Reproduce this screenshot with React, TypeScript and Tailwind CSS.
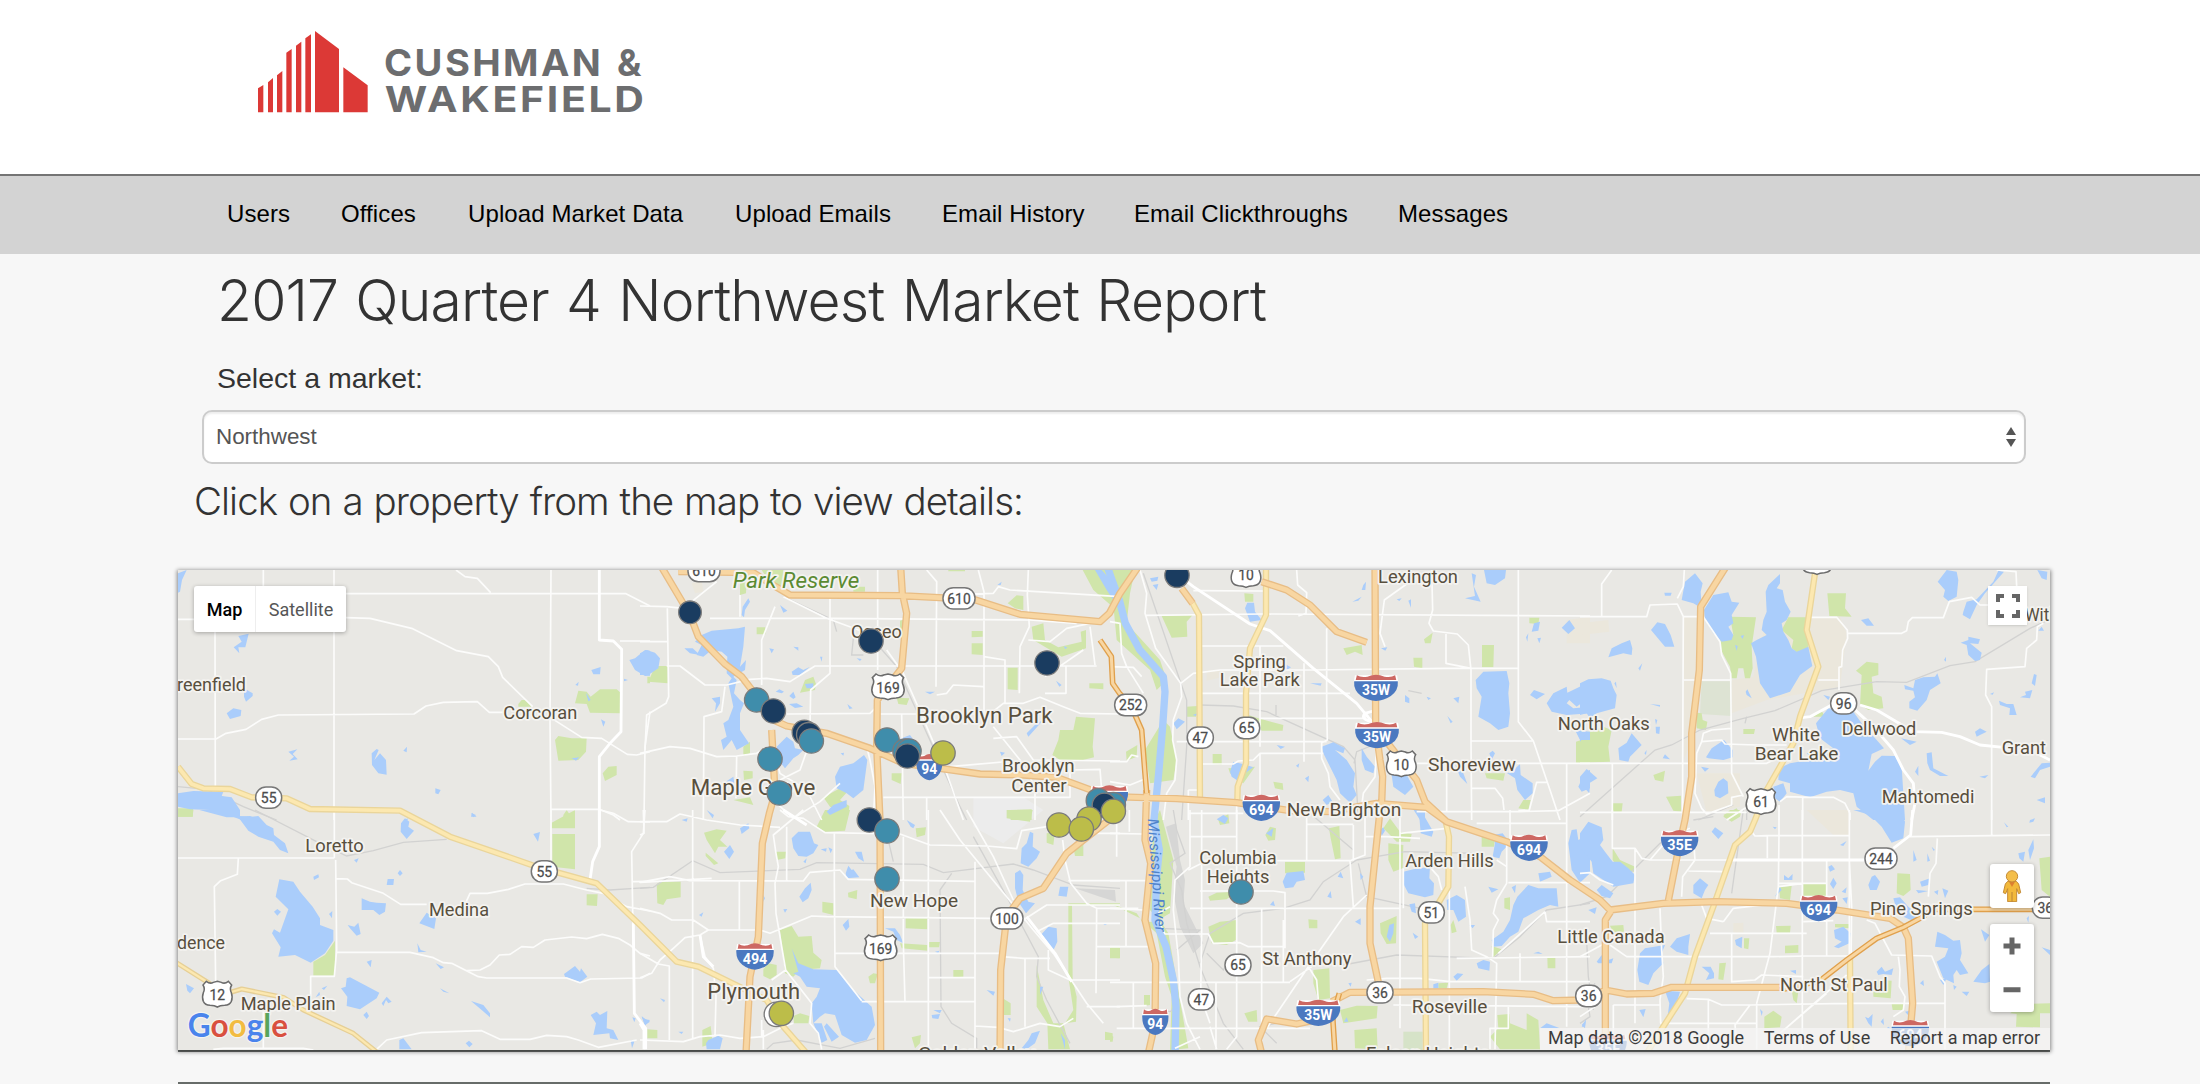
import React from "react";

type Pt = [number, number];

/* Map geometry is stored per sheet; each sheet has its own origin in map units (3 units = 1px). */
const SHEETS: Pt[] = [
  [0, 0],
  [0, 750],
  [1410, 0],
  [1410, 750],
  [2820, 0],
  [2820, 750],
  [4230, 0],
  [4230, 750],
];

const TAN: string[] = [
  "",
  "",
  "M155,70L185,62L190,95L165,100Z",
  "",
  "M290,330L345,330L340,350L290,362ZM1370,180L1440,170L1440,250L1370,250Z",
  "",
  "M0,190L85,180L88,215L0,225ZM312,170L358,170L350,500L312,600ZM560,170L780,170L800,220L780,380L560,420L455,460L455,360L520,350ZM350,640L480,640L480,740L380,760Z",
  "M460,340L490,338L490,370L460,372ZM680,0L808,0L808,75L760,75Z",
];

const PARKS: string[] = [
  "M1045,432L1055,420L1068,420L1085,440L1045,440ZM1215,430L1225,392L1250,395L1262,410L1290,388L1340,388L1352,398L1350,460L1260,458L1250,432ZM1155,540L1165,528L1205,535L1250,535L1248,575L1225,600L1165,602ZM1298,640L1315,620L1340,618L1340,645L1305,663ZM1432,350L1440,350L1440,370L1432,370ZM24,745L70,745L68,770L24,770ZM1180,765L1190,750L1200,765L1215,752L1215,780L1180,780Z",
  "M24,0L70,0L68,20L24,20ZM1145,38L1215,0L1215,55L1145,55ZM1147,72L1215,72L1215,178L1147,170ZM1250,253L1283,253L1281,288L1250,286ZM430,455L465,435L495,392L495,497L430,497Z",
  "M300,60L320,50L318,100L300,105ZM365,30L430,30L430,85L400,85ZM640,80L675,80L675,95L640,95ZM925,30L975,30L975,34L925,34ZM1328,30L1440,30L1440,160L1360,90ZM1103,130L1130,106L1150,108L1150,150L1125,145ZM350,202L376,202L376,223L350,223ZM25,365L45,318L83,318L83,370ZM995,213L1028,213L1028,230L995,232ZM995,250L1028,250L1028,285L995,283ZM780,182L795,178L790,215L780,220ZM1175,200L1210,190L1215,240L1255,262L1325,245L1322,215L1338,210L1338,265L1265,290L1180,240ZM480,398L495,360L520,350L528,372L525,390ZM1103,323L1133,323L1133,390L1103,388ZM1348,370L1390,370L1390,388L1348,385ZM770,413L808,415L800,435L775,432ZM1237,585L1255,540L1260,510L1300,510L1308,470L1365,475L1358,560L1362,592L1320,602L1260,600ZM310,560L330,545L330,580L310,588ZM310,632L338,634L338,655L312,660ZM755,640L785,640L782,672L755,660ZM550,712L600,685L618,668L625,692L600,720L628,738L625,765L570,740ZM280,720L330,712L340,735ZM1110,750L1175,748L1175,780L1112,780Z",
  "M530,50L555,0L630,0L615,62L555,65ZM50,222L60,215L122,215L122,262L80,268L70,285L52,280ZM192,68L230,58L260,62L240,90L262,110L235,110L225,130L200,90ZM197,128L235,160L222,165L197,138ZM407,125L438,125L436,145L410,150ZM827,55L858,52L855,75L830,82ZM1100,0L1178,0L1170,35L1100,25ZM1220,70L1245,65L1240,105L1220,98ZM1300,110L1330,95L1330,138L1305,138ZM547,275L580,280L580,315L547,307ZM624,248L652,240L650,268L625,262ZM420,360L455,348L475,380L515,378L520,428L545,450L540,475L480,480L460,500L435,490ZM797,325L862,325L862,358L797,355ZM780,400L862,405L862,422L785,415ZM866,396L900,396L897,412L866,412ZM370,478L385,460L410,465L410,495L390,508L370,498ZM685,500L700,490L713,492L705,520L690,520ZM940,480L970,480L970,500L940,502ZM1412,412L1440,412L1440,445L1412,443ZM460,618L480,610L508,618L505,640L462,640ZM22,658L52,660L52,685L22,685ZM187,660L212,648L218,700L187,710ZM815,682L843,675L840,700L825,715ZM1088,565L1112,580L1112,615L1092,615ZM1190,465L1210,570L1240,640L1270,640L1290,718L1225,718L1222,640L1190,590ZM1395,665L1418,670L1418,690L1395,690ZM1285,280L1440,280L1440,286L1296,286L1298,510L1310,560L1308,635L1275,640L1300,600L1285,500Z",
  "M0,30L75,30L60,100L50,190L150,300L170,360L140,390L120,330L20,240ZM155,168L248,165L230,185L232,230L185,233ZM403,100L430,102L430,125L405,125ZM50,215L60,212L85,250L65,270L48,250ZM1258,173L1288,173L1285,192L1258,190ZM700,265L755,255L758,285L735,275L710,285ZM942,238L968,218L962,250L945,250ZM910,293L937,293L937,325L912,320ZM1116,255L1152,255L1150,322L1116,322ZM230,440L262,438L258,470L230,470ZM415,465L445,475L520,495L518,512L455,512ZM105,570L160,480L180,500L200,600L190,660L120,670ZM48,575L82,555L80,590L50,602ZM308,582L335,582L335,615L308,612ZM355,625L435,620L400,670L360,640ZM490,665L518,670L520,690L495,685ZM1398,545L1440,530L1440,610L1398,608ZM1125,640L1185,640L1180,662L1130,655ZM1225,745L1240,720L1262,720L1255,750ZM330,780L345,765L355,780Z",
  "M0,412L28,412L28,445L0,445ZM102,555L120,555L120,585L102,587ZM0,675L10,680L8,695L0,695ZM130,40L150,0L190,150L180,310L145,330L120,300ZM0,280L80,310L100,340L150,330L175,370L205,540L235,715L180,720L185,560L165,500L140,370L90,325ZM325,30L355,12L358,40L330,45ZM466,75L480,50L498,55L495,90L475,92ZM657,55L688,48L692,145L675,148L662,85ZM820,55L840,25L870,65L905,72L900,95L860,95ZM835,100L880,105L878,175L850,185L835,150ZM525,155L585,155L585,188L525,190ZM295,260L320,248L380,245L350,268L300,272ZM295,350L330,335L380,330L378,390L350,405L305,400ZM595,328L622,330L622,355L597,355ZM810,340L860,318L858,400L830,402L812,370ZM1022,345L1030,330L1040,365L1025,370ZM1183,265L1200,262L1200,300L1183,295ZM1115,80L1155,85L1152,110L1115,110ZM1145,408L1175,418L1150,442ZM1312,443L1336,443L1336,475L1313,475ZM610,480L658,475L660,565L625,570L610,520ZM403,610L440,600L442,635L415,635ZM690,600L740,587L803,588L800,625L700,640ZM733,660L800,655L803,718L735,715ZM985,520L1015,518L1010,535L985,535ZM1162,615L1198,612L1200,640L1250,660L1250,610L1285,630L1290,718L1170,718L1140,680L1165,655Z",
  "M450,170L528,172L515,260L518,325L510,355L495,355L490,325L475,325L470,355L455,355L450,320L420,265L420,240L460,225ZM625,172L680,172L685,265L655,280L635,265L640,240L605,210ZM742,100L798,100L795,145L815,170L748,168ZM828,332L860,305L895,310L895,345L875,350L880,400L905,410L910,445L865,450L840,435L845,345ZM0,525L70,500L95,510L85,560L90,605L0,608ZM350,458L365,460L368,480L382,485L378,510L350,505ZM490,507L525,507L522,522L490,522ZM700,470L725,453L735,470ZM220,645L255,632L250,665L225,660ZM258,710L303,707L303,755L280,752ZM98,730L128,730L125,755L98,755ZM430,765L470,745L480,760L450,780Z",
  "M98,115L120,150L165,170L162,185L115,175L98,150ZM430,20L450,0L485,0L480,20L455,35ZM90,347L130,345L132,365L100,368ZM597,230L635,228L630,270L600,265ZM670,222L738,220L738,262L670,260ZM952,190L990,192L992,240L970,258L950,250ZM1378,145L1410,140L1410,260L1385,240ZM588,348L632,347L630,368L590,368ZM765,342L810,342L808,355L765,352ZM615,407L655,405L655,428L615,430ZM492,385L508,385L505,418L492,415ZM418,460L438,458L430,510L415,508ZM880,510L935,512L932,565L880,560ZM553,620L580,602L605,620L600,652L553,655ZM635,540L655,545L650,580L640,570ZM935,582L972,578L970,600L938,600ZM1290,610L1310,612L1308,650L1380,652L1380,610L1410,610L1410,580L1330,582Z",
];

const WATER: string[] = [
  "M24,40L50,30L36,60L30,95L24,98ZM205,228L236,221L226,262L205,262L208,280L191,262L215,245ZM222,385L248,400L248,408L228,425L222,410ZM170,460L190,445L214,450L212,468L180,477ZM355,575L382,568L368,582L383,598L358,602L372,590ZM605,580L620,567L626,570L613,600L630,580L648,600L650,644L625,640L606,615ZM700,572L711,560L710,577ZM796,685L812,690L805,703L796,700ZM1264,330L1292,321L1290,343L1270,343ZM1378,300L1395,295L1425,270L1440,272L1440,347L1425,348L1395,330ZM1248,398L1262,420L1255,424ZM1293,478L1306,485L1300,500ZM1216,375L1226,365L1224,377ZM1362,356L1374,360L1362,364ZM1205,595L1228,592L1218,602ZM24,700L70,693L160,695L155,708L185,712L210,750L210,770L240,768L272,780L215,780L175,765L120,750L60,748L24,740ZM903,770L906,758L920,770ZM700,780L715,775L712,780Z",
  "M88,0L205,0L207,18L245,20L265,18L290,45L310,55L312,75L345,100L355,130L330,120L310,95L265,80L235,62L205,22L170,22ZM693,40L705,25L718,35L715,50L732,62L710,87L692,65ZM903,10L918,15L910,22ZM1090,72L1110,66L1104,95ZM328,208L370,215L390,245L428,290L450,325L450,345L490,360L490,392L465,430L422,458L375,435L325,440L332,412L306,370L312,358L330,368L355,298L317,260ZM430,200L445,193L447,202L432,210ZM683,190L690,180L698,190L690,198ZM653,207L672,207L670,225L650,225ZM552,150L566,145L560,158ZM575,265L600,275L620,278L648,280L645,305L628,315L610,300L575,300ZM533,345L553,350L565,338L572,372L560,377L540,355ZM748,340L770,308L798,325L793,357ZM312,305L322,297L333,305L322,317ZM477,312L487,303L486,325ZM742,400L752,420L770,425L745,427ZM590,455L605,450L602,472ZM797,460L822,472L812,477ZM513,535L527,530L530,505L540,502L628,548L620,565L570,598L530,588L532,560ZM1182,492L1215,468L1230,485L1233,475L1252,500L1230,517L1185,500ZM635,580L650,560L665,575L655,580L648,570L640,588ZM580,615L590,605L597,618L590,627ZM48,522L72,535L60,550L52,542ZM437,562L448,545L450,555ZM455,535L472,527L462,540ZM810,535L838,550L820,545ZM903,573L940,585L960,610L960,622L935,600ZM1262,615L1280,605L1290,615L1312,603L1310,655L1330,660L1345,690L1320,685L1318,670L1270,675L1278,640ZM1415,620L1440,635L1425,645ZM1387,622L1397,625L1393,637ZM1382,690L1393,695L1386,715ZM887,700L897,692L908,702L898,712ZM688,690L700,685L725,718L688,718Z",
  "M0,280L20,270L45,278L60,295L55,325L25,345L0,345ZM185,225L215,212L295,205L315,200L310,260L300,320L318,300L315,330L280,350L290,360L282,400L300,420L312,430L300,460L300,510L327,550L290,570L275,540L250,570L243,540L260,530L250,490L265,480L280,440L265,370L275,355L260,340L262,290L245,275L215,270L190,290L170,285L185,255L165,245ZM133,265L158,265L180,285L150,280ZM305,165L308,140L325,115L330,125L315,150L312,172ZM420,135L442,152L430,158ZM1072,75L1085,65L1082,75ZM460,260L475,262L475,272ZM388,265L402,268L395,280ZM540,290L547,290L545,305ZM650,295L665,297L660,303ZM455,335L475,322L490,330L510,320L480,345L458,345ZM495,372L520,370L520,385L500,385ZM407,395L418,388L432,395L425,400ZM448,408L460,395L467,412L460,417ZM447,432L470,430L490,440L465,444ZM855,395L885,395L870,403ZM622,432L638,445L628,447ZM1272,258L1282,263L1275,267ZM1248,362L1265,375L1258,380ZM215,415L240,410L240,430L225,455L228,430ZM602,580L612,578L610,587ZM410,560L440,530L460,545L465,565L490,570L475,585L460,595L435,625L415,600ZM585,650L600,620L640,610L672,585L682,600L670,690L640,715L620,700L590,685ZM560,755L580,735L620,720L620,740L590,755L570,765ZM257,665L280,650L283,668L262,680ZM1080,575L1095,578L1085,588ZM1160,520L1190,490L1210,480L1165,530ZM1365,30L1385,30L1430,80L1440,150L1400,90ZM770,540L810,525L825,545L790,550Z",
  "M300,55L325,40L328,55L305,72ZM200,0L222,15L218,25ZM125,30L143,25L140,35ZM252,125L270,105L282,125L268,147ZM455,85L475,65L510,65L522,100L535,105L520,130L500,140L475,138L460,115ZM490,155L500,145L497,160ZM542,118L560,115L558,125ZM565,112L577,118L572,130ZM645,125L665,125L672,155L655,145ZM617,190L625,167L635,180L640,178L658,202L620,205ZM800,30L825,45L820,55L812,50ZM478,260L495,235L512,218L515,240L505,265L488,277ZM430,298L442,297L435,308ZM370,255L375,265L370,275ZM608,345L625,327L628,350L618,362ZM177,315L190,307L185,320ZM735,355L765,355L780,375L790,400L770,390L760,365ZM455,415L475,460L520,478L590,480L640,540L695,590L705,645L680,690L645,698L605,675L585,615L555,610L540,620L520,640L515,580L530,560L540,535L500,530L480,500L460,490L475,485ZM520,640L545,640L562,690L545,698ZM560,640L597,680L575,695L552,650ZM885,425L898,422L895,430ZM60,565L75,570L72,577ZM5,618L15,628L30,630L15,647ZM115,665L130,665L125,672ZM198,700L205,690L235,677L248,685L240,718L200,718ZM1125,190L1140,180L1150,195L1148,240L1165,275L1185,280L1158,310L1135,275L1125,235ZM1142,160L1145,115L1160,100L1170,65L1180,70L1178,110L1200,125L1190,145L1165,170ZM1260,230L1285,230L1280,260L1255,257ZM1205,372L1225,350L1250,355L1252,395L1238,425L1225,400ZM1040,540L1065,545L1060,557ZM875,615L900,612L895,627L877,625ZM1200,530L1210,530L1200,555ZM1390,342L1405,340L1395,346ZM1103,625L1112,625L1110,635ZM1165,690L1175,670L1200,662L1185,700L1160,718L1145,715ZM880,600L905,600L900,610ZM1262,670L1275,690L1275,718Z",
  "M120,55L145,50L142,62L125,65ZM128,75L145,72L140,90ZM405,145L412,128L432,128L435,155L455,180L420,185ZM760,75L768,65L766,90L755,90ZM727,125L755,110L745,122ZM860,118L875,115L868,123ZM895,122L903,118L903,143ZM1122,30L1188,30L1185,55L1155,75L1130,70ZM1085,40L1098,45L1092,80L1112,125L1065,115L1095,108ZM1355,203L1378,180L1395,205L1375,222ZM1265,215L1272,190L1290,185L1285,212ZM1248,232L1255,220L1252,245ZM1282,235L1293,233L1288,250ZM813,265L832,262L826,272ZM600,370L635,370L632,377ZM520,310L543,322L530,330ZM1097,360L1120,335L1190,333L1198,370L1195,400L1200,460L1195,500L1165,510L1140,490L1105,470L1115,410L1100,385ZM1260,405L1272,390L1305,402L1280,418ZM1310,430L1330,400L1370,380L1372,398L1440,365L1440,410L1400,440L1378,420L1370,430L1390,445L1440,440L1440,460L1370,465L1325,455ZM1395,510L1440,515L1440,540L1410,540ZM885,405L898,415L898,430L885,425ZM950,410L963,415L955,420ZM1030,415L1048,410L1045,430ZM1012,468L1028,485L1022,490ZM190,490L205,475L225,485L200,508ZM248,465L262,460L258,468ZM500,555L525,560L512,567ZM360,635L370,605L410,615L430,622L405,640L395,670L365,650ZM635,560L670,547L705,565L700,580L675,570L710,600L735,640L730,680L740,705L720,728L690,700L680,660L640,580ZM755,565L770,590L795,620L790,640L765,630L755,600ZM845,645L890,645L910,680L885,705L850,680ZM1035,612L1060,640L1072,672L1050,650ZM1138,580L1148,572L1155,580L1145,600ZM1185,635L1200,640L1230,612L1232,645L1268,670L1268,700L1245,720L1222,690L1215,655ZM1405,680L1425,635L1440,630L1440,685L1415,695ZM585,655L597,647L595,667ZM558,617L568,610L565,623ZM638,720L655,705L668,725L650,735ZM905,740L945,750L945,780L930,780Z",
  "M320,28L340,15L355,25L345,42ZM468,70L490,55L485,80ZM518,215L530,188L580,183L585,210L560,215L550,232L525,235ZM652,260L662,243L665,265ZM683,200L692,185L700,205ZM750,188L760,200L752,210ZM480,285L490,272L495,288ZM880,185L910,178L960,170L958,205L972,220L970,255L945,262L895,250L882,225ZM1010,270L1040,255L1065,270L1068,320L1045,335L1030,300L1012,300ZM898,283L915,280L918,310L905,305ZM838,345L852,340L850,370L840,395L830,380ZM735,335L752,325L752,345ZM908,368L925,380L915,387ZM932,0L970,65L965,80L932,70L928,20ZM1150,75L1178,70L1200,100L1175,125L1168,145L1148,140L1155,100ZM810,60L820,52L825,62L815,78ZM1375,100L1385,60L1400,58L1405,90L1425,80L1430,60L1440,60L1440,190L1410,218L1385,180ZM1285,190L1320,185L1325,200L1290,215ZM1135,230L1165,238L1145,248ZM1205,232L1218,225L1215,250ZM1145,390L1180,365L1200,330L1210,285L1222,260L1255,225L1285,235L1340,235L1345,290L1320,285L1285,300L1240,325L1225,365L1200,380L1175,408L1150,410ZM1078,345L1095,345L1088,355ZM1270,430L1285,425L1298,432ZM1100,460L1120,450L1140,455L1138,482L1105,475ZM1030,500L1042,490L1060,492L1040,512ZM970,523L985,518L985,535L970,535ZM702,635L710,622L715,635ZM1290,655L1310,640L1350,655ZM1415,645L1427,632L1425,655ZM715,520L725,518L722,530ZM460,785L465,785L462,790Z",
  "M305,120L315,65L345,40L368,70L362,95L365,145L340,130ZM253,98L275,98L272,107L255,107ZM213,210L232,187L255,192L272,225L283,260L255,260ZM85,292L95,265L125,250L150,240L157,265L155,285L130,280ZM372,150L400,105L445,97L455,125L478,128L455,165L460,190L445,200L460,225L455,240L425,245L400,220L375,180ZM465,255L473,258L470,272ZM482,228L492,225L488,237ZM557,95L565,75L600,42L600,70L590,85L608,90L615,125L632,155L620,180L605,190L610,215L625,240L635,265L650,275L685,260L697,318L660,345L630,395L570,415L540,370L528,290L513,250L530,240L560,225L545,210L550,180L560,155ZM1073,65L1100,30L1130,35L1135,60L1130,110L1105,123L1090,110L1095,90ZM1150,155L1160,125L1190,118L1240,65L1255,32L1272,35L1215,100L1190,135L1170,178L1148,165ZM1372,30L1402,35L1400,60L1385,55ZM843,180L865,175L882,197L860,197ZM1142,248L1165,240L1165,230L1200,238L1195,252L1170,250L1205,278L1200,300L1185,303L1165,285L1160,255ZM1092,300L1098,290L1098,305ZM1375,212L1385,200L1392,212ZM973,375L1000,385L1005,360L1030,352L1065,350L1072,340L1082,370L1050,390L1040,420L1012,452L988,445L988,425L1005,412L1000,392L975,388ZM1355,370L1362,342L1370,345L1365,378ZM1320,412L1338,405L1335,395L1357,390L1350,415ZM1257,422L1280,432L1300,432L1310,465L1288,465L1290,445L1260,435ZM1230,402L1242,397L1238,404ZM0,370L25,358L65,355L92,362L100,385L110,405L105,445L50,460L30,475L20,460L0,465ZM0,515L20,520L0,545ZM175,325L187,310L180,332ZM497,395L502,388L515,415L500,405ZM103,370L108,365L110,385ZM210,432L240,435L240,440ZM225,477L232,480L228,495ZM227,500L240,500L238,522L228,520ZM115,565L140,548L155,520L185,555L150,590L145,605L118,600ZM193,580L200,570L198,585ZM248,595L255,583L270,598ZM0,650L20,627L52,655L30,668L28,700L0,670ZM378,592L395,565L432,540L458,570L458,592L430,600L385,595ZM363,620L387,625L375,635ZM403,690L415,665L430,655L443,665L445,700L420,715L405,708ZM708,490L745,445L820,455L845,490L890,540L912,565L875,582L865,632L885,605L905,587L950,588L965,620L975,780L880,780L830,740L820,700L780,690L740,695L690,712L630,695L630,670L595,660L597,625L630,610L700,598L680,580L760,565L720,535ZM765,600L800,600L785,635ZM580,680L610,670L620,700L600,725L585,715ZM1040,580L1055,577L1060,625L1105,648L1080,648L1050,630L1042,610ZM1005,635L1015,617L1015,648ZM963,535L1010,545L990,555ZM1185,515L1200,505L1220,515L1200,525L1190,530ZM1352,650L1385,610L1410,608L1410,620L1380,630L1365,655ZM1198,650L1225,645L1215,655ZM1370,720L1395,712L1395,730ZM730,405L750,410L745,420Z",
  "M0,70L25,35L65,52L70,90L60,105L75,125L98,155L120,155L145,175L165,195L160,220L100,230L40,190L35,155L0,110ZM395,65L405,52L430,70L415,87ZM820,0L960,0L975,35L970,85L935,98L905,50L870,15ZM578,50L590,52L585,58ZM50,240L65,225L100,250L90,265L65,258ZM25,300L50,292L45,312ZM340,225L360,205L385,225L375,240L365,265L340,250ZM612,195L625,205L638,192L637,210L612,210ZM745,170L755,165L765,178L750,185ZM750,222L760,203L770,220L760,237ZM780,105L800,93L790,108ZM870,240L865,225L875,200L885,195L900,215L890,240ZM785,245L800,232L797,250ZM787,265L803,262L800,282ZM585,260L600,230L605,240ZM1000,120L1010,150L1000,155ZM1042,130L1050,152L1042,155ZM1055,110L1065,120L1060,122ZM1020,215L1050,205L1045,225L1025,230ZM1008,240L1045,243L1015,250ZM1062,245L1075,240L1073,255ZM1087,235L1105,242L1095,265ZM940,265L960,262L985,290L1020,320L1005,335L970,320L975,295L950,300ZM1065,410L1072,365L1095,375L1120,392L1140,390L1145,430L1140,450L1165,490L1140,495L1130,480L1120,495L1122,520L1090,505L1070,455L1095,440L1105,415ZM1180,515L1205,480L1228,462L1230,515L1215,520ZM1203,358L1228,375L1215,395ZM765,385L762,360L790,350L812,370L808,400L775,415L762,410L785,395ZM465,390L487,380L485,415L468,405ZM630,482L648,480L648,492ZM270,410L290,385L330,372L325,410L325,435L290,425ZM172,480L180,430L195,415L255,405L245,430L250,460L220,490L205,525L178,515ZM50,455L65,435L70,455L100,445L95,460L55,460ZM365,470L392,470L402,490L402,505L378,510L388,490ZM255,542L300,545L290,580L262,625L268,580ZM178,600L197,597L190,622ZM5,650L18,628L15,650ZM1272,37L1285,50L1280,52ZM1350,30L1365,25L1360,35L1348,38ZM1345,120L1360,88L1362,115L1350,150ZM1315,130L1335,125L1330,155L1318,145ZM1385,412L1410,420L1410,435ZM890,485L905,470L915,485L940,475L935,495L910,492L895,495ZM1020,520L1030,510L1032,528ZM1080,510L1100,505L1090,525ZM1120,525L1130,530L1122,540ZM1145,545L1168,545L1160,558ZM855,620L865,625L878,612L875,650L865,640ZM902,635L910,625L912,645ZM920,655L925,650L935,658ZM540,597L548,605L545,618ZM975,605L1000,600L990,622ZM1340,325L1347,318L1345,338ZM1280,595L1300,590L1295,600Z",
];

const RIVER =
  "M2812,20L2826,60L2848,120L2866,190L2908,268L2980,350L2985,395L2978,500L2966,640L2952,780L2968,870L2960,950L2955,1080L2988,1160L3010,1260L3018,1340L3015,1480";

const ROADS: string[] = [
  "M280,30V80M492,30V780M858,30L885,50L922,55L962,98M528,101L1368,101L1440,138M24,178H72M528,173L600,175L725,205L860,272L955,290L985,320L998,352L1088,440M24,537H138L168,520L228,508L275,478L325,465L732,462L768,438L820,427L922,425L958,457H1000M135,215L136,690M1143,30L1140,480L1143,780M1150,478L1235,532L1295,535L1372,583L1400,585L1440,575M1350,243H1440M1143,748L1288,748L1330,765L1350,780M1440,455L1425,560L1422,780",
  "M24,144H493M493,0V144M205,145L202,193L152,212L133,230L137,515M497,150L500,420L493,499H422V560M500,206L532,207L545,218L640,250L692,283H770M885,283L900,250L952,250L1015,238L1065,222L1180,222L1250,240L1300,250L1370,290L1440,303M500,427H720L790,443L820,458L845,460L925,500L950,504H1190L1230,518L1262,507L1415,504L1440,490M890,482L930,480L960,465L988,435L1020,433L1055,410L1090,412L1125,390L1205,381L1250,386L1297,373L1345,385L1380,405L1410,430L1440,438M1388,215L1440,214M1390,405L1385,125L1420,70L1425,0M130,718L160,715H400L430,720M620,718L650,690L755,668L935,662L990,688L1080,688L1130,676L1190,680L1225,690L1285,712L1400,690M1330,10L1375,35L1440,36M1143,0V150M1290,0L1330,10M280,590V718",
  "M0,138L80,140L130,145L230,65M0,245H82M82,145L86,410L78,430L20,465L15,570M80,318L120,318L195,375H260L330,358L380,355L450,365L525,318L850,318H1370M210,175L575,175L1170,180L1310,190M300,105V170M570,110V340L512,390L510,500M430,110L560,175L670,215M365,375V240L405,140M713,30V330M860,30L890,65L888,380M1015,30L1032,95V460M1165,30L1162,105L1168,200L1140,260L1138,400M940,103L1060,100L1075,80L1110,90L1440,110M1165,240L1230,245L1280,205L1350,190M1350,200L1358,260L1365,315M1032,290L1095,300V430M890,405L920,400L940,375L1030,380M440,462L690,460L720,430M720,462H1050L1090,430L1150,430L1200,412L1270,440L1320,460L1440,462M1330,270L1215,350M740,270L790,340L860,500L920,640L970,780M785,462L790,780M1060,500L1140,600L1185,680V780M255,380L245,455L192,470L190,780M0,580L90,560L150,565L230,590L290,588L350,580L385,560M290,590L288,715M400,560L420,640L500,690L545,780M515,500L510,545L480,630L420,660M860,712V780M730,712L1290,712V600M1060,535L1130,530L1180,600L1440,603M1290,630L1380,628L1385,690M410,730L460,775L540,725L600,670M680,560L690,600L705,680L700,780M930,620L1120,603M1278,320V400L1215,400",
  "M0,35L80,35L120,12L200,30L300,45L420,52M0,75L12,70L10,0M158,0V690M215,205L0,217L90,200L150,212L490,213L510,187L600,180L625,208L1005,214M298,215V360M420,0L445,20L490,25L555,68L780,72L870,105L1040,108L1130,116L1145,62L1220,50M490,0L400,75L408,130L415,170L405,220L408,310L420,380L437,480L515,580L510,640L535,670L545,718M440,50V212M583,70V215L585,470L665,572M865,0V718M0,295L60,310L95,330L160,330L205,360L360,360L390,370L515,318L560,320L1050,325M205,360L180,375L135,383L100,415L60,450L35,490L0,503M180,375L195,440L220,475L228,560L225,680M0,430L55,462L88,468V690M585,430H1085M790,80V400L795,575M665,575H1005M1005,155V718M865,503H1005M1085,440L1150,445H1230M1155,445V650M1005,648L1075,652L1120,665L1200,640L1260,650L1300,625M1268,90L1275,150L1292,220L1340,280L1370,295H1440M1150,330L1220,285L1440,285M1190,365L1240,340L1440,340M900,0L960,90L1100,260L1180,360L1240,430L1340,580L1390,640M980,0L1060,140L1120,270M1225,420V480L1290,510H1440M1370,295L1368,550M1340,590H1440M0,690L130,695L180,680L240,675L300,685L370,680L430,650L460,640M370,660V718M1370,410H1440M365,630V680M395,510L437,480M1285,212H1440M1340,70H1440",
  "M90,30L110,100L105,160L137,265L212,370L215,410L190,480L188,540L200,600L195,660L170,700L160,780M0,185L30,190L35,280L50,320L100,400M105,166L460,162L1440,168M250,92L460,93M560,30L563,75L590,98L588,160L565,168M650,205V430L652,540L635,548L635,595L655,640L660,680L690,720M270,258H520M212,370L250,340L330,330L410,330L600,330L1010,325L1225,325M582,310V605M270,400H720M450,260V560M450,475H760L775,465M200,545L330,545L650,545M275,612L370,612L385,603L430,600L450,580H640M825,260L810,220L823,120L890,72L905,62M965,30L968,150L957,190L970,213L1042,222L1075,255L1083,330V545L1085,780M1008,222V310L1083,325M1225,30V485L1270,543H1085M1270,543L1320,690L1350,780M920,610H1440M1010,620V755M1085,685H1155L1178,715L1182,750M1225,752L1258,750L1280,667H1310M920,755L1225,755L1345,752L1440,700M1370,612V750M800,560L795,650L760,700L750,780M235,690V780M235,690L262,690M235,760L400,760M450,580V780M380,690V780M0,320L70,322L95,350M0,605H50L65,585L85,590M0,665L60,675L110,655",
  "M20,0V140M58,0V65M0,70L100,72M0,212H115M48,212V410M0,295H85M0,410H130M0,517H540M240,0V170L195,210L190,300L205,440L210,560L230,640L270,718M240,80H380M275,152L460,152H720M380,0V680L350,718M275,0V370L272,560L300,640M235,180L275,160M270,243L490,243L525,248V415M145,310L180,290M145,330L165,372L295,372L310,400L390,398L415,410H520M0,295L100,300M240,295H870M455,295V718M590,0V152M590,43H730M730,45V152M765,0V135L720,152L730,290M770,255L700,320L595,470L470,655M595,470L620,510L625,570M540,515L605,470M20,590L110,587M70,517V655M318,517V718M20,655H600M270,680L195,715M300,650L320,718M770,510L830,505H930L1020,515L1440,515M870,0V600M880,175V295M870,560V655M1018,80V718M1010,55L870,70M950,160L985,200L995,240M1065,230L1080,330L1085,420L1130,440L1160,460L1155,718M1190,100L1190,220L1160,270L1150,310L1165,330L1150,360L1148,440M1195,218H1440M1040,445L1440,440M1230,430V515M1160,150L1190,170M850,585L1440,590M1195,590V655L1140,655V718M1305,305L1165,430M1305,305L1310,335H1440M1370,0V650M1100,40H1370M1200,0V90M765,80L830,80L930,85M520,330V517",
  "M95,30L65,72V168M0,170H200L210,135L292,132L310,170H355M313,30L310,80L292,115M310,170L308,610V780M370,170L420,245L425,285L452,340L455,640L490,710M690,172L770,172L802,210L803,235L788,270L785,320L777,322V390M312,360H455M715,360H777M805,220L965,220L980,212L985,185L997,173H1090L1108,125L1175,112L1200,135H1225M1310,78L1308,35L1250,30M1390,190L1372,200L1370,240L1340,265L1335,320L1220,328L1217,405L1235,440V780M0,610H560L590,595M365,545L370,520L395,510L455,505M365,545L425,540L435,552L530,555L620,555M365,545L350,580L345,700L365,745L380,762L455,735V712L490,705M440,780L510,735M97,612V780M0,757H500M600,725L620,710L690,712L760,712L795,730L810,760V780M668,712V780M597,735V780M665,505L640,550",
  "M97,0V115L165,115L185,145L210,150L455,150M165,115V640M210,150L270,80L330,55M305,260L308,200L345,150L340,80M325,183L430,185M515,65L525,78L560,77H808M562,77V145M455,150L860,150M597,0V75L595,230L580,350L570,430L530,580M667,0V718M808,0V440M808,150L815,290L810,720M595,220H738M740,150V440M595,230L670,220M430,335L460,295L590,280M365,285L380,325L430,335M240,295L245,420L250,500L240,570L242,640M90,405L140,440L580,440L680,438H808M455,370V515L525,510L545,495L670,500M390,370H680M670,335L760,332M455,370H520M860,330L885,340L935,435L1055,438L1080,500L1095,520V718M955,440L960,480L958,530L975,560L970,600L940,620M100,585H240M320,566L385,568L425,585L510,585L810,580L1095,580M385,568V718M510,585L465,645L470,700M740,550L600,670M800,495L600,670M990,80L1410,75M1072,85L1068,160L1050,190L1045,260M1235,0V75M0,190L30,188L60,210L100,225M0,440L75,400M100,585V718M0,620L60,580M530,580V718M240,640H530",
];

const MAJOR: string[] = [
  "M1288,30V240L1330,243L1355,268L1353,515L1320,550L1288,590V780",
  "M1288,0V110L1268,155L1260,210M1390,340L1393,610L1427,655V718",
  "",
  "M430,0L500,45M0,640L12,660V718M180,375L190,440L220,470M1160,320L1245,430L1295,515",
  "M205,45L250,80L420,192L480,212L610,325L740,430L790,490M782,485Q750,475 765,460L800,450",
  "",
  "M665,473L690,470L755,435M840,435L890,450L1000,515L1085,517L1140,530L1200,555L1270,562M1370,580L1410,600M820,445L880,500L940,570L970,630L1000,670L1005,730L995,780",
  "M455,150H860M998,0L992,75L940,115",
];

const RAIL: string[] = [
  "M24,680L110,688L220,740L320,780",
  "M255,0L440,95L530,138L610,122L700,97L830,88M1250,235L1320,240L1440,232",
  "M430,110L580,180L590,215M640,235L635,285L670,285M700,240L770,320L960,740L980,780",
  "M0,235L40,232L158,152L240,188L480,178L530,158L850,163L910,188L1120,162L1180,180L1300,225L1440,235M935,190L900,240L903,590L935,640L1010,685V718M1000,80L1100,260L1195,440L1190,500L1220,570L1290,700M380,718L400,700L470,690L600,715L705,685M740,70L760,155",
  "M100,40L230,420V560L215,780M270,435L370,438L470,455L700,560L735,600L745,780M498,435V465M790,555L740,575L732,610M895,392L935,400",
  "M190,0L200,60L225,130L180,160L215,240L230,340L270,470L340,640L400,718M740,150L640,215L600,270L520,295L400,310L300,370L270,460M740,150L885,125L1100,130M745,160L770,260L1000,310M1150,445L860,435L700,465M1150,445L1230,380L1310,300L1440,280M150,355L270,360L200,420M290,430L340,480L370,440M150,600L180,605L200,590M500,640L450,650L500,700M730,120L600,10",
  "M0,770L225,570L275,555L360,510L490,475L585,452L725,392L890,365L980,367L1110,317L1185,305L1350,205L1395,185M500,470L495,490M355,780L460,735M500,720V780",
  "M330,55L240,100L150,190L80,260L0,285M490,0L455,250M20,390L25,500L40,600M0,640L30,620L20,560L45,520M340,30L400,20",
];

const YARD = "M2988,800L3018,790L3030,900L3045,960L3040,1030L3070,1090L3100,1150L3070,1180L3030,1100L3010,1000L3020,920Z M2715,985L2835,990L2838,1025L2790,1010Z";

const YELLOW = [
  "M24,620L65,672L100,685L180,687L245,712L350,715L420,747L690,752L840,830L1100,920L1280,970L1410,1095L1520,1205L1585,1220L1790,1320L1840,1400L1910,1480",
  "M3068,130L3087,165L3090,725",
  "M3288,20V165L3240,265L3228,400V610L3203,680L3202,725",
  "M3826,780L3837,830L3835,980L3805,1030L3765,1090L3768,1480",
  "M4935,40L4910,210L4945,320L4890,470L4870,550L4790,690L4755,780L4740,815L4695,855L4630,1040L4575,1190L4545,1300L4470,1415L4430,1480",
  "M5040,1190L5042,1480",
];
const YELLOW_THIN = ["M10,1202L110,1265L165,1302L215,1287L340,1312L400,1350L550,1420L625,1480"];

const ORANGE = [
  "M1474,20L1560,165L1585,230L1665,312L1715,350L1755,402L1810,480L1850,498L1970,520L2100,565L2200,610L2310,625L2430,642L2560,645L2660,652L2790,700L2830,710L3020,716L3200,728L3360,752L3480,755L3620,730L3770,742L3830,785L4010,845L4110,890L4200,960L4290,1020L4320,1050L4480,1030L4640,1025L4850,1030L5000,1050L5160,1075L5200,1102L5215,1135L5228,1330L5215,1480",
  "M1805,510L1810,600L1815,700L1798,760L1777,850L1765,1130L1740,1250L1728,1480",
  "M2192,20L2197,100L2210,160L2195,325L2175,350L2122,420L2120,560L2130,780L2132,1480",
  "M1525,35L1750,38L1800,70L1860,105L2190,107L2410,118L2550,163L2790,185L2818,160L2850,100L2905,20",
  "M2830,770L2740,840L2690,880L2620,985L2550,1015L2510,1070L2492,1230L2490,1480",
  "M3275,65L3350,90L3420,135L3500,215L3590,247",
  "M3035,85L3068,130",
  "M3615,20L3617,500L3630,600L3638,650L3635,730L3628,770L3600,1040V1150L3628,1280",
  "M3460,1375L3380,1392L3290,1377L3265,1440L3275,1480",
  "M3485,1325L3540,1297L3940,1295L4090,1303L4150,1322L4240,1320L4306,1290L4370,1302L4450,1300L4505,1282L4850,1282",
  "M3650,545L3700,610L3740,660L3765,725L3830,785",
  "M4668,20L4592,140L4588,330L4565,520V650L4545,780L4525,870L4495,1022",
  "M4325,1050L4306,1080V1480",
  "M2930,690L2925,840L2942,910L2925,1080L2957,1210L2955,1390L2935,1480",
];
const DEEP = [
  "M2790,240L2824,290L2828,370L2850,402L2882,435L2915,510L2925,640L2930,700",
  "M3508,1300L3488,1370L3495,1480",
  "M4830,1290L4950,1262L5030,1200L5120,1135L5200,1102L5250,1075L5290,1048L5640,1048",
];

type Label = [string, number, number, number, number?];
/* text, left edge, baseline, width, font size */
const LABELS: Label[] = [
  ["reenfield", 21, 393, 207],
  ["Corcoran", 1000, 476, 222],
  ["Loretto", 406, 876, 175],
  ["Medina", 777, 1068, 180],
  ["dence", 21, 1167, 144],
  ["Maple Plain", 212, 1350, 285],
  ["Osseo", 2043, 235, 152],
  ["Brooklyn Park", 2238, 489, 410, 66],
  ["Brooklyn", 2496, 637, 218],
  ["Center", 2524, 695, 166],
  ["Maple Grove", 1562, 706, 374, 66],
  ["New Hope", 2100, 1042, 264],
  ["Plymouth", 1612, 1318, 278, 66],
  ["Golden Valley", 2245, 1500, 350],
  ["Lexington", 3624, 69, 240],
  ["Spring", 3190, 323, 158],
  ["Lake Park", 3149, 379, 240],
  ["Shoreview", 3774, 634, 264],
  ["New Brighton", 3350, 769, 344],
  ["North Oaks", 4163, 511, 276],
  ["Columbia", 3088, 912, 232],
  ["Heights", 3110, 968, 188],
  ["Arden Hills", 3706, 920, 265],
  ["St Anthony", 3277, 1215, 267],
  ["Roseville", 3725, 1358, 227],
  ["Falcon Heights", 3588, 1500, 370],
  ["Little Canada", 4162, 1150, 322],
  ["White", 4806, 543, 144],
  ["Bear Lake", 4754, 601, 251],
  ["Dellwood", 5015, 526, 224],
  ["Grant", 5495, 582, 133],
  ["Mahtomedi", 5135, 728, 278],
  ["Pine Springs", 5100, 1065, 308],
  ["North St Paul", 4830, 1294, 323],
  ["Withrow", 5564, 182, 185],
];

type Shield = ["s" | "u" | "i", string, number, number];
const SHIELDS: Shield[] = [
  ["s", "55", 296, 713],
  ["s", "55", 1123, 934],
  ["u", "12", 142, 1302],
  ["s", "610", 1602, 33],
  ["s", "610", 2367, 115],
  ["u", "169", 2154, 380],
  ["i", "94", 2278, 622],
  ["i", "494", 1755, 1190],
  ["u", "169", 2132, 1163],
  ["s", "100", 2511, 1075],
  ["u", "10", 3228, 43],
  ["s", "252", 2882, 435],
  ["s", "47", 3091, 533],
  ["s", "65", 3230, 504],
  ["i", "35W", 3618, 384],
  ["i", "35W", 3621, 526],
  ["u", "10", 3694, 611],
  ["i", "694", 2818, 716],
  ["i", "694", 3274, 744],
  ["i", "694", 4077, 864],
  ["s", "51", 3784, 1057],
  ["s", "65", 3204, 1215],
  ["s", "47", 3094, 1318],
  ["s", "36", 3630, 1297],
  ["i", "35W", 3445, 1359],
  ["i", "94", 2956, 1386],
  ["s", "36", 4256, 1308],
  ["s", "96", 5021, 430],
  ["u", "61", 4773, 724],
  ["i", "35E", 4529, 850],
  ["s", "244", 5133, 896],
  ["i", "694", 4946, 1045],
  ["s", "36", 5626, 1043],
  ["i", "694", 5221, 1420],
  ["i", "35E", 4314, 1462],
  ["u", "61", 4941, 4],
];

const NAVY = "#1a3c60";
const TEAL = "#3f8dab";
const OLIVE = "#bcbd49";
const PINS: [string, number, number][] = [
  [NAVY, 1560, 157],
  [NAVY, 2103, 243],
  [NAVY, 2631, 309],
  [TEAL, 1760, 420],
  [NAVY, 1810, 453],
  [NAVY, 1903, 517],
  [NAVY, 1916, 524],
  [TEAL, 1924, 543],
  [TEAL, 1800, 597],
  [TEAL, 1828, 699],
  [TEAL, 2151, 540],
  [TEAL, 2205, 573],
  [TEAL, 2217, 573],
  [NAVY, 2212, 588],
  [OLIVE, 2319, 579],
  [NAVY, 2098, 780],
  [TEAL, 2151, 813],
  [TEAL, 2151, 957],
  [TEAL, 2785, 722],
  [TEAL, 2830, 734],
  [NAVY, 2803, 736],
  [OLIVE, 2667, 795],
  [OLIVE, 2757, 777],
  [OLIVE, 2734, 807],
  [OLIVE, 2830, 754],
  ["#ffffff", 1819, 1363],
  [OLIVE, 1834, 1360],
  [NAVY, 3021, 46],
  [TEAL, 3213, 996],
];

function Layer({ sheets, ...rest }: { sheets: string[] } & React.SVGProps<SVGGElement>) {
  return (
    <g {...rest}>
      {sheets.map((d, i) => (d ? <path key={i} d={d} transform={`translate(${SHEETS[i][0]} ${SHEETS[i][1]})`} /> : null))}
    </g>
  );
}

function Road({ lines, casing, fill, width }: { lines: string[]; casing: string; fill: string; width: number }) {
  const d = lines.join("");
  return (
    <g fill="none" strokeLinejoin="round">
      <path d={d} stroke={casing} strokeWidth={width} />
      <path d={d} stroke={fill} strokeWidth={width - 8} />
    </g>
  );
}

function ShieldMark({ shield }: { shield: Shield }) {
  const [kind, text, x, y] = shield;
  const wide = text.length > 2;
  if (kind === "i") {
    const sx = text === "35W" ? 1.17 : wide ? 1 : 0.7;
    return (
      <g transform={`translate(${x} ${y})`}>
        <g transform={`scale(${sx} 1)`}>
          <path d="M-54,-38H54L57,-18H-57Z" fill="#fff" />
          <path d="M-52,-24L-49,-38Q-38,-30 -22,-34Q-10,-40 0,-40Q10,-40 22,-34Q38,-30 49,-38L52,-24Z" fill="#cd6863" />
          <path d="M-56,-20H56Q58,8 38,24Q20,38 0,39Q-20,38 -38,24Q-58,8 -56,-20Z" fill="#4a78c0" />
        </g>
        <text y="21" textAnchor="middle" fontSize="42" fontWeight="700" fill="#fff" textLength={text === "35W" ? 84 : wide ? 74 : 48} lengthAdjust="spacingAndGlyphs">
          {text}
        </text>
      </g>
    );
  }
  return (
    <g transform={`translate(${x} ${y})`}>
      {kind === "s" ? (
        <rect x={wide ? -48 : -39} y="-32" width={wide ? 96 : 78} height="64" rx="31" fill="#fff" stroke="#777" strokeWidth="4.5" />
      ) : (
        <path
          transform={`scale(${wide ? 1.09 : 1} 1)`}
          d="M-33,-38Q-22,-29 -12,-35L0,-38L12,-35Q22,-29 33,-38L43,-27Q36,-16 42,-4Q47,10 42,22Q37,33 22,34Q8,34 0,39Q-8,34 -22,34Q-37,33 -42,22Q-47,10 -42,-4Q-36,-16 -43,-27Z"
          fill="#fff"
          stroke="#6c6c6c"
          strokeWidth="4.5"
        />
      )}
      <text y={kind === "u" ? 18 : 16} textAnchor="middle" fontSize="44" fill="#4c4c4c" stroke="#4c4c4c" strokeWidth="0.8" textLength={wide ? 70 : 47} lengthAdjust="spacingAndGlyphs">
        {text}
      </text>
    </g>
  );
}

function MapCanvas() {
  return (
    <svg className="block h-[480px] w-[1872px] font-['Roboto',sans-serif]" viewBox="24 30 5616 1440" preserveAspectRatio="none">
      <rect x="24" y="30" width="5616" height="1440" fill="#e9e8e4" />
      <Layer sheets={TAN} fill="#ebe7dc" />
      <path d="M4595,364H4684V468L4590,462Z" fill="#dde3d3" />
      <path d="M3700,1415H3758V1470H3700Z" fill="#d6e3c8" />
      <path d="M2410,712H2560L2620,750L2500,850L2410,800Z" fill="#ececec" />
      <Layer sheets={PARKS} fill="#d0e5aa" />
      <path d={YARD} fill="#d6d6d5" />
      <Layer sheets={RAIL} fill="none" stroke="#d2d2d1" strokeWidth="4" />
      <path d={RIVER} fill="none" stroke="#aacdfb" strokeWidth="22" strokeLinejoin="round" />
      <Layer sheets={WATER} fill="#aacdfb" />
      <Layer sheets={ROADS} fill="none" stroke="#fcfcfb" strokeWidth="5" strokeLinejoin="round" />
      <Layer sheets={MAJOR} fill="none" stroke="#ffffff" strokeWidth="8.5" strokeLinejoin="round" />
      <Road lines={YELLOW} casing="#ead59a" fill="#fce8b0" width={19} />
      <Road lines={YELLOW_THIN} casing="#e6cf95" fill="#fce8b0" width={15} />
      <Road lines={ORANGE} casing="#e8bd85" fill="#f8d6a2" width={22} />
      <Road lines={DEEP} casing="#e0a04c" fill="#f8d6a2" width={17} />
      <g fill="#584f3e" stroke="#f4f3f0" strokeWidth="11" strokeLinejoin="round" paintOrder="stroke">
        {LABELS.map(([t, x, y, w, size]) => (
          <text key={t + x} x={x} y={y} fontSize={size ?? 55} textLength={w} lengthAdjust="spacingAndGlyphs">
            {t}
          </text>
        ))}
        <text x="1688" y="83" fontSize="65" fontStyle="italic" fill="#5b8a32" textLength="380" lengthAdjust="spacingAndGlyphs">
          Park Reserve
        </text>
      </g>
      <text
        transform="translate(2933 777) rotate(86)"
        fontSize="46"
        fontStyle="italic"
        fill="#4f83cb"
        textLength="340"
        lengthAdjust="spacingAndGlyphs"
      >
        Mississippi River
      </text>
      {SHIELDS.map((s, i) => (
        <ShieldMark key={i} shield={s} />
      ))}
      {PINS.map(([c, x, y], i) => (
        <circle key={i} cx={x} cy={y} r={i === 0 ? 34 : 36.5} fill={c} stroke="#7b7b7b" strokeWidth="4" />
      ))}
      <text
        x="53"
        y="1432"
        fontSize="98"
        fontWeight="700"
        fontFamily="Lato, sans-serif"
        stroke="#f4f3f0"
        strokeWidth="7"
        paintOrder="stroke"
        textLength="301"
        lengthAdjust="spacingAndGlyphs"
      >
        <tspan fill="#4a84ec">G</tspan>
        <tspan fill="#d9503f">o</tspan>
        <tspan fill="#f2bc42">o</tspan>
        <tspan fill="#4a84ec">g</tspan>
        <tspan fill="#58a55c">l</tspan>
        <tspan fill="#d9503f">e</tspan>
      </text>
    </svg>
  );
}

function Logo() {
  return (
    <svg className="block h-[110px] w-[420px]" viewBox="0 0 1260 330">
      <path
        fill="#dc3936"
        d="M54,205L70,195V277H54ZM84,187L99,174V277H84ZM111,166L127,153V277H111ZM139,98L155,87V277H139ZM168,77L184,65V277H168ZM196,55L213,43V277H196ZM225,33L297,87V277H225ZM310,142L383,196V277H310Z"
      />
      <g fill="#6c6d6f" fontFamily="Inter, sans-serif" fontWeight="700" letterSpacing="7">
        <text x="432" y="167" fontSize="109" textLength="658" lengthAdjust="spacingAndGlyphs">
          CUSHMAN
        </text>
        <text x="1131" y="167" fontSize="109" letterSpacing="0">
          &amp;
        </text>
        <text x="434" y="276" fontSize="107" textLength="786" lengthAdjust="spacingAndGlyphs">
          WAKEFIELD
        </text>
      </g>
    </svg>
  );
}

const NAV: [string, string][] = [
  ["Users", "w-[63px]"],
  ["Offices", "w-[76px]"],
  ["Upload Market Data", "w-[216px]"],
  ["Upload Emails", "w-[156px]"],
  ["Email History", "w-[141px]"],
  ["Email Clickthroughs", "w-[213px]"],
  ["Messages", "w-[111px]"],
];

export default function App() {
  return (
    <div className="h-[1084px] w-[2200px] overflow-hidden bg-[#f7f7f7] font-['Liberation_Sans',sans-serif] text-[#333]">
      <header className="h-[174px] bg-white pt-5 pl-60">
        <Logo />
      </header>
      <nav className="flex h-20 gap-[51px] border-t-2 border-[#747474] bg-[#d3d3d3] pl-[227px] text-[24px] leading-[76px] tracking-[0.1px] text-black">
        {NAV.map(([label, width]) => (
          <a key={label} className={`whitespace-nowrap ${width}`}>
            {label}
          </a>
        ))}
      </nav>
      <main className="pr-[150px] pl-[178px]">
        <h1 className="h-[86px] pl-[39px] font-['Inter',sans-serif] text-[57px] leading-[93px] font-light tracking-[-0.85px] [word-spacing:2px] whitespace-nowrap">
          2017 Quarter 4 Northwest Market Report
        </h1>
        <div className="h-[70px] pl-[39px] text-[28.5px] leading-[77px]">Select a market:</div>
        <div className="ml-6 flex h-[54px] w-[1824px] items-center justify-between rounded-[10px] border-2 border-[#ccc] bg-white pr-2 pl-3 text-[22.4px] text-[#555] shadow-[inset_0_2px_2px_rgba(0,0,0,0.07)]">
          <span>Northwest</span>
          <svg className="h-5 w-2.5" viewBox="0 0 10 20">
            <path d="M5,0L10,8H0ZM5,20L0,12H10Z" fill="#555" />
          </svg>
        </div>
        <h2 className="h-[106px] pl-4 font-['Inter',sans-serif] text-[38.5px] leading-[75px] font-light tracking-[-0.95px] [word-spacing:1px] whitespace-nowrap">
          Click on a property from the map to view details:
        </h2>
        <section className="relative h-[480px] w-[1872px] shadow-[0_1px_4px_1px_rgba(0,0,0,0.45),0_2px_0_#6d716f]">
          <MapCanvas />
          <div className="absolute top-4 left-4 flex h-[46px] overflow-hidden rounded-[3px] bg-white font-['Roboto',sans-serif] text-[18px] leading-[47px] shadow-[0_1px_4px_rgba(0,0,0,0.3)]">
            <div className="w-[62px] border-r border-[#eee] text-center font-medium text-black">Map</div>
            <div className="w-[90px] text-center text-[#565656]">Satellite</div>
          </div>
          <div className="absolute top-4 right-[23px] flex size-[39px] items-center justify-center bg-white shadow-sm">
            <svg className="size-6" viewBox="0 0 24 24" fill="none" stroke="#666" strokeWidth="4">
              <path d="M2,8V2H8M16,2H22V8M22,16V22H16M8,22H2V16" />
            </svg>
          </div>
          <div className="absolute right-4 bottom-[142px] flex size-11 items-center justify-center rounded-[3px] bg-white shadow-[0_1px_4px_rgba(0,0,0,0.3)]">
            <svg className="h-8 w-5" viewBox="0 0 60 96">
              <path d="M17,34H43L50,42L56,68L50,71L44,56V95H17V56L11,71L4,68L10,42Z" fill="#f2b93b" stroke="#c58b35" strokeWidth="3" />
              <path d="M20,34H40L30,51Z" fill="#dd7f31" />
              <path d="M30,66V95" stroke="#b98436" strokeWidth="3" />
              <circle cx="30" cy="19" r="17" fill="#f4be4a" stroke="#c58b35" strokeWidth="3" />
            </svg>
          </div>
          <div className="absolute right-4 bottom-[38px] h-[88px] w-11 rounded-[3px] bg-white shadow-[0_1px_4px_rgba(0,0,0,0.3)]">
            <svg className="h-[88px] w-11" viewBox="0 0 44 88" stroke="#666" strokeWidth="5">
              <path d="M13.5,22H30.5M22,13.5V30.5M13.5,65.7H30.5" />
            </svg>
          </div>
          <div className="absolute right-0 bottom-0 flex h-[22px] w-[510px] justify-between bg-[#f5f5f5]/75 pr-[10px] pl-2 font-['Roboto',sans-serif] text-[18px] leading-[20px] whitespace-nowrap text-[#3c3c3c]">
            <span>Map data ©2018 Google</span>
            <span>Terms of Use</span>
            <span>Report a map error</span>
          </div>
        </section>
        <div className="mt-8 h-1 bg-[#676c69]" />
      </main>
    </div>
  );
}
